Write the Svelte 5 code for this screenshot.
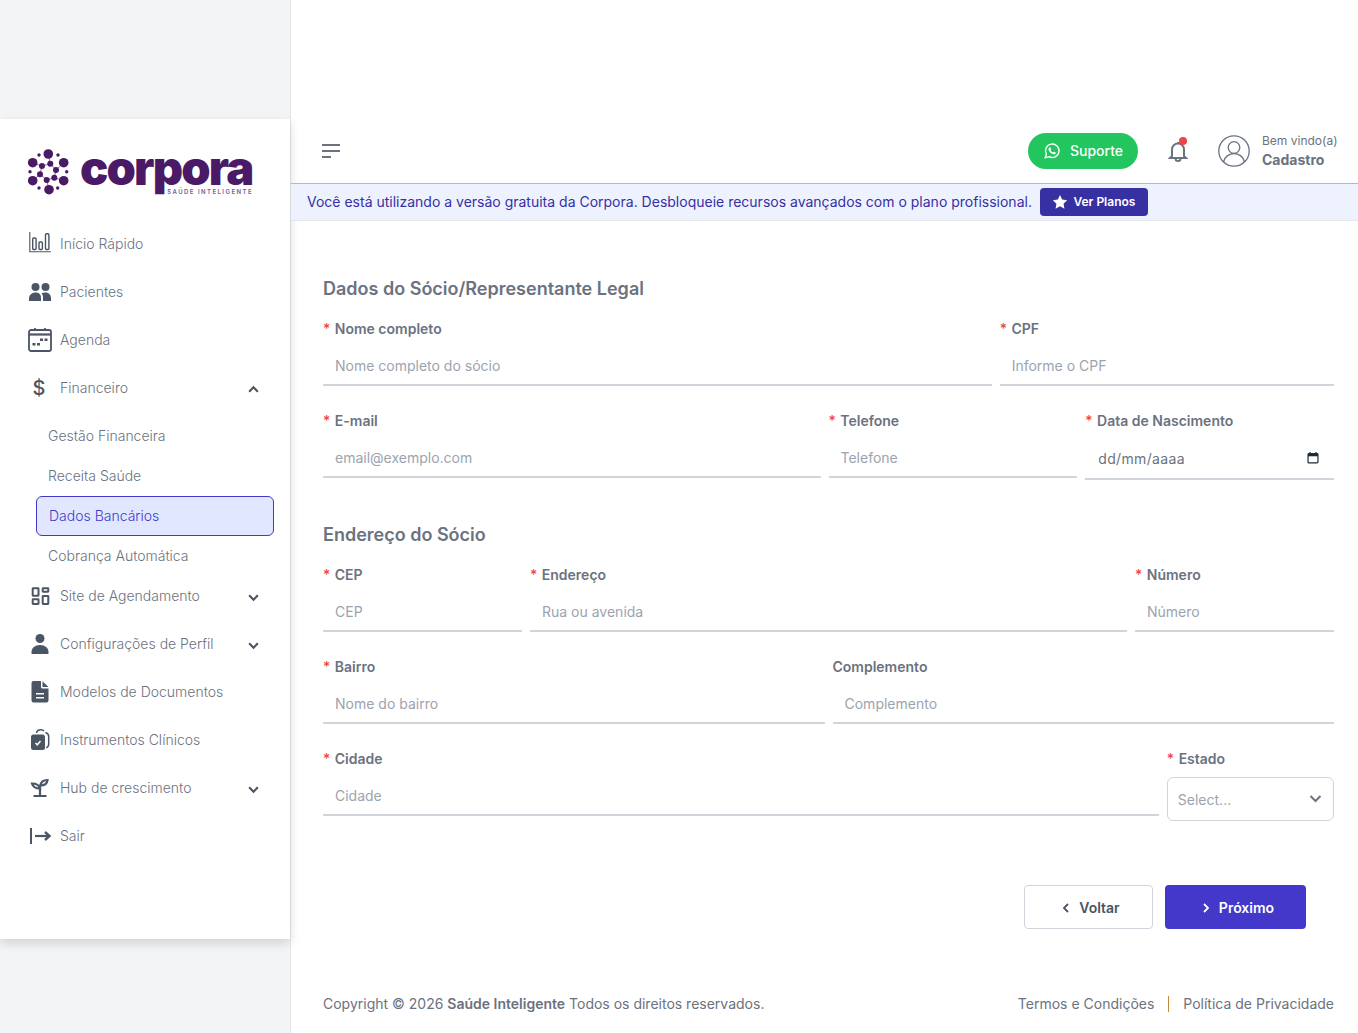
<script>
  const menuTop = [
    { label: 'Início Rápido', icon: 'chart' },
    { label: 'Pacientes', icon: 'users' },
    { label: 'Agenda', icon: 'cal' }
  ];
  const sub = ['Gestão Financeira', 'Receita Saúde', 'Dados Bancários', 'Cobrança Automática'];
  const menuBottom = [
    { label: 'Site de Agendamento', icon: 'grid', chev: true },
    { label: 'Configurações de Perfil', icon: 'user', chev: true },
    { label: 'Modelos de Documentos', icon: 'doc' },
    { label: 'Instrumentos Clínicos', icon: 'clip' },
    { label: 'Hub de crescimento', icon: 'sprout', chev: true },
    { label: 'Sair', icon: 'exit' }
  ];
  const dots = [
    [48.3,154,4.8],[32.7,162.7,4.8],[63.7,162.7,4.8],[32.7,180.7,4.8],[63.7,180.7,4.8],[49,189.7,4.8],
    [42,166,3],[50.3,163.7,3],[56,170,3],[40,174.3,3],[46.7,180,3],[54.3,177.7,3],
    [39,155,1.7],[58,155,1.7],[30,171.7,1.7],[66.7,171.7,1.7],[39,188,1.7],[57.7,188,1.7]
  ];
  const links = [[48.3,154,50.3,163.7],[32.7,162.7,42,166],[63.7,162.7,56,170],[32.7,180.7,40,174.3],[63.7,180.7,54.3,177.7],[49,189.7,46.7,180],[42,166,50.3,163.7],[42,166,40,174.3],[40,174.3,46.7,180],[46.7,180,54.3,177.7],[54.3,177.7,56,170],[50.3,163.7,56,170]];
</script>

{#snippet icon(name)}
  <svg class="ico" viewBox="0 0 24 24" aria-hidden="true">
    {#if name === 'chart'}
      <path d="M1.800 0v19.700h21" fill="none" stroke="#4b5563" stroke-width="1.100"/>
      <g fill="none" stroke="#4b5563" stroke-width="1.400"><rect x="4.700" y="6" width="3.400" height="11.500" rx="1"/><rect x="11" y="10" width="3.400" height="7.500" rx="1"/><rect x="17.500" y="1.800" width="3.400" height="15.700" rx="1"/></g>
    {:else if name === 'users'}
      <g fill="#4b5563"><circle cx="7.500" cy="7" r="4"/><circle cx="17.500" cy="7" r="4"/><path d="M1 21v-2.500c0-3.500 3-6 6.500-6s5.500 2 5.500 5v3.500z"/><path d="M15 21v-4c0-1.500-.6-3-1.500-3.800 1-.5 2.500-.7 4-.7 3.500 0 5.500 2.500 5.500 6v2.500z"/></g>
    {:else if name === 'cal'}
      <path d="M7 0v3M17 0v3" stroke="#4b5563" stroke-width="1.800"/>
      <rect x="1" y="2" width="22" height="21" rx="2" fill="none" stroke="#4b5563" stroke-width="1.800"/>
      <path d="M1 6.500h22" stroke="#4b5563" stroke-width="2.200"/>
      <g fill="#4b5563"><rect x="4.500" y="15" width="3" height="2.500"/><rect x="9" y="15" width="3" height="2.500"/><rect x="12" y="10.500" width="3" height="2.500"/><rect x="16.500" y="10.500" width="3" height="2.500"/></g>
    {:else if name === 'grid'}
      <g fill="none" stroke="#4b5563" stroke-width="2"><rect x="4.700" y="4.300" width="5.800" height="7.400" rx=".4"/><rect x="14.700" y="4.300" width="5.600" height="3.400" rx=".4"/><rect x="4.700" y="15.300" width="5.800" height="4.700" rx=".4"/><rect x="14.700" y="12" width="5.600" height="8" rx=".4"/></g>
    {:else if name === 'user'}
      <g fill="#4b5563"><circle cx="12" cy="6.500" r="4.500"/><path d="M3.500 21.500v-1.500c0-4 3.500-7 8.500-7s8.500 3 8.500 7v1.500c0 .3-.2.5-.5.5H4c-.3 0-.5-.2-.5-.5z"/></g>
    {:else if name === 'doc'}
      <path fill="#4b5563" fill-rule="evenodd" d="M5.500 1H13v6c0 .8.700 1.500 1.500 1.500h6v12a2 2 0 0 1-2 2h-13a2 2 0 0 1-2-2v-17.500a2 2 0 0 1 2-2zM8 13v1.500h8V13zM8 17v1.500h8V17z"/>
      <path fill="#4b5563" d="M14.500 1.200 20.500 7h-6z"/>
    {:else if name === 'clip'}
      <path d="M8.500 5C8.800 3 10.500 1.800 12.500 1.800h.5M16 3.200c-.5-.8-1.500-1.400-3-1.400M17.500 4.500c2 .5 3.200 2 3.200 4v7.500c0 2-.8 3.200-2.400 3.800" fill="none" stroke="#4b5563" stroke-width="1.500"/>
      <rect x="3" y="6.500" width="14" height="15.500" rx="2.500" fill="#4b5563"/>
      <path d="M7.500 15l1.800 1.800 3.200-3.800" fill="none" stroke="#fff" stroke-width="1.500"/>
    {:else if name === 'sprout'}
      <g fill="none" stroke="#4b5563" stroke-width="2.200"><path d="M5.500 20h13M12 20v-8c0-2 .3-3 1-4"/><path d="M4 7.500c3.500 0 7 1.500 8 5-3.500 0-7-1.200-8-5z"/><path d="M19.500 4c-3.500 0-6.500 1-7 5.500 3.500 0 6.500-1.500 7-5.500z"/></g>
    {:else if name === 'exit'}
      <path d="M3 4v16" stroke="#4b5563" stroke-width="2"/>
      <path d="M7 12h13" stroke="#4b5563" stroke-width="2.200"/>
      <path d="M17 8l4.500 4-4.500 4" fill="none" stroke="#4b5563" stroke-width="2.400"/>
    {/if}
  </svg>
{/snippet}

{#snippet chevron(up)}
  <svg class="chev" viewBox="0 0 12 12" aria-hidden="true"><path d={up ? 'M2 8l4-4 4 4' : 'M2 4l4 4 4-4'} /></svg>
{/snippet}

{#snippet field(label, placeholder, req = true, grow = 1)}
  <div class="field" style="flex-grow:{grow}">
    <span class="lab">{#if req}<i>*</i>{/if}{label}</span>
    <input class="inp" {placeholder} />
  </div>
{/snippet}

<div class="page">
  <aside class="side">
    <div class="panel">
      <div class="logo">
        <svg class="mark" viewBox="26 147 46 49" aria-hidden="true">
          <g stroke="#6d4a8c" stroke-width=".8">{#each links as l}<line x1={l[0]} y1={l[1]} x2={l[2]} y2={l[3]} />{/each}</g>
          <g fill="#4a1a66">{#each dots as d}<circle cx={d[0]} cy={d[1]} r={d[2]} />{/each}</g>
        </svg>
        <div class="word">
          <span class="wm">corpora</span>
          <span class="tag">SAÚDE INTELIGENTE</span>
        </div>
      </div>
      <nav class="nav">
        {#each menuTop as m}
          <div class="item">{@render icon(m.icon)}<span>{m.label}</span></div>
        {/each}
        <div class="item">
          <span class="dollar">$</span><span class="grow">Financeiro</span>{@render chevron(true)}
        </div>
        <div class="subs">
          {#each sub as s}
            <div class="sub" class:active={s === 'Dados Bancários'}>{s}</div>
          {/each}
        </div>
        {#each menuBottom as m}
          <div class="item">{@render icon(m.icon)}<span class="grow">{m.label}</span>{#if m.chev}{@render chevron(false)}{/if}</div>
        {/each}
      </nav>
    </div>
  </aside>

  <main class="main">
    <header class="top">
      <svg class="burger" viewBox="0 0 18 14" aria-hidden="true"><path d="M0 1h18M0 7h18M0 13h9"/></svg>
      <div class="top-right">
        <div class="suporte">
          <svg viewBox="0 0 24 24" aria-hidden="true"><path fill="none" stroke="#fff" stroke-width="1.800" d="M3 21l1.500-5A9 9 0 1 1 8 19.500z"/><path fill="#fff" d="M8.500 7.500c.4-.4 1-.5 1.300-.2l1 2c.1.300 0 .600-.2.800l-.6.700c.7 1.400 1.800 2.500 3.300 3.200l.8-.8c.2-.2.500-.3.800-.2l2 1c.3.300.2 1-.2 1.500-.8.900-2 1-3 .7-3.200-.9-5.500-3.200-6.300-6-.3-1-.2-2 1.100-2.700z"/></svg>
          <span>Suporte</span>
        </div>
        <div class="bell">
          <svg viewBox="0 0 24 24" aria-hidden="true"><path fill="none" stroke="#6b7280" stroke-width="2" d="M6 17V10.500a6 6 0 0 1 12 0V17l2 2H4zM9.500 19.500a2.500 2.500 0 0 0 5 0M12 3v1.500"/></svg>
          <span class="dot"></span>
        </div>
        <svg class="avatar" viewBox="0 0 32 32" aria-hidden="true"><circle cx="16" cy="16" r="15.200"/><circle cx="16" cy="12.500" r="5.800"/><path d="M5.500 27c1-5 5.500-8.500 10.500-8.500s9.500 3.500 10.500 8.500"/></svg>
        <div class="who"><span>Bem vindo(a)</span><b>Cadastro</b></div>
      </div>
    </header>
    <div class="banner">
      <span>Você está utilizando a versão gratuita da Corpora. Desbloqueie recursos avançados com o plano profissional.</span>
      <div class="plans">
        <svg viewBox="0 0 24 24" aria-hidden="true"><path fill="#fff" d="M12 1.500l3.300 6.900 7.500 1-5.500 5.200 1.400 7.500L12 18.500l-6.700 3.600 1.400-7.500L1.200 9.400l7.500-1z"/></svg>
        <span>Ver Planos</span>
      </div>
    </div>

    <form class="form">
      <h2 class="first">Dados do Sócio/Representante Legal</h2>
      <div class="row">
        {@render field('Nome completo', 'Nome completo do sócio', true, 2)}
        {@render field('CPF', 'Informe o CPF')}
      </div>
      <div class="row">
        {@render field('E-mail', 'email@exemplo.com', true, 2)}
        {@render field('Telefone', 'Telefone')}
        <div class="field">
          <span class="lab"><i>*</i>Data de Nascimento</span>
          <div class="date">
            <input class="inp tall" placeholder="dd/mm/aaaa" />
            <svg viewBox="0 0 14 14" aria-hidden="true"><path d="M3.500 0v2M10.500 0v2" stroke="#1f2937" stroke-width="1.400"/><rect x="1.200" y="2" width="11.600" height="10.800" rx="1" fill="none" stroke="#1f2937" stroke-width="1.400"/><rect x="1.200" y="2" width="11.600" height="3" fill="#1f2937"/></svg>
          </div>
        </div>
      </div>

      <h2>Endereço do Sócio</h2>
      <div class="row">
        {@render field('CEP', 'CEP')}
        {@render field('Endereço', 'Rua ou avenida', true, 3)}
        {@render field('Número', 'Número')}
      </div>
      <div class="row">
        {@render field('Bairro', 'Nome do bairro')}
        {@render field('Complemento', 'Complemento', false)}
      </div>
      <div class="row last">
        {@render field('Cidade', 'Cidade', true, 5)}
        <div class="field">
          <span class="lab"><i>*</i>Estado</span>
          <div class="select"><span>Select...</span>{@render chevron(false)}</div>
        </div>
      </div>

      <div class="actions">
        <button type="button" class="btn back"><svg viewBox="0 0 12 12" aria-hidden="true"><path d="M8 2L4 6l4 4"/></svg>Voltar</button>
        <button type="button" class="btn next"><svg viewBox="0 0 12 12" aria-hidden="true"><path d="M4 2l4 4-4 4"/></svg>Próximo</button>
      </div>
    </form>

    <footer class="foot">
      <span>Copyright © 2026 <b>Saúde Inteligente</b> Todos os direitos reservados.</span>
      <div class="legal"><span>Termos e Condições</span><em></em><span>Política de Privacidade</span></div>
    </footer>
  </main>
</div>

<style>
  :global(body) { margin: 0; background: #fff; }
  .page {
    display: flex;
    height: 1033px;
    overflow: hidden;
    font-family: Inter, "Liberation Sans", sans-serif;
    font-size: 14px;
    line-height: 20px;
    color: #6b7280;
  }
  .side {
    width: 290px;
    flex: none;
    background: #f3f4f6;
    border-right: 1px solid #e5e7eb;
    padding-top: 119px;
    box-sizing: content-box;
  }
  .panel {
    height: 820px;
    background: #fff;
    box-shadow: 0 4px 10px rgba(0,0,0,.14);
    box-sizing: border-box;
    padding-top: 29px;
  }
  .logo { display: flex; gap: 8px; margin-left: 26px; height: 62px; }
  .mark { width: 46px; height: 49px; flex: none; margin-top: -1px; }
  .word { display: flex; flex-direction: column; width: 173px; }
  .wm {
    font-weight: 900;
    font-size: 47px;
    line-height: 36px;
    letter-spacing: -1.800px;
    color: #4a1a66;
    margin-top: 2px;
  }
  .tag {
    font-size: 6px;
    font-weight: 600;
    line-height: 8px;
    letter-spacing: 1.450px;
    color: #7a5a94;
    text-align: right;
    margin-top: 2px;
  }
  .nav { margin-top: 14px; font-weight: 300; }
  .item {
    height: 40px;
    margin-bottom: 8px;
    display: flex;
    align-items: center;
    padding: 0 26px 0 28px;
  }
  .ico { width: 24px; height: 24px; flex: none; margin-right: 8px; }
  .dollar { width: 22px; margin-right: 10px; text-align: center; font-size: 20px; font-weight: 500; color: #4b5563; }
  .grow { flex: 1; }
  .chev { width: 13px; height: 13px; flex: none; fill: none; stroke: #4b5563; stroke-width: 2; margin-top: 3px; margin-right: 4px; }
  .subs { padding: 0 16px 0 36px; }
  .sub {
    height: 40px;
    display: flex;
    align-items: center;
    padding-left: 12px;
    box-sizing: border-box;
  }
  .sub.active {
    background: #e0e7ff;
    border: 1px solid #4338ca;
    border-radius: 6px;
    color: #4338ca;
  }

  .main { flex: 1; min-width: 0; padding-top: 119px; display: flex; flex-direction: column; }
  .top {
    height: 64px;
    display: flex;
    align-items: center;
    justify-content: space-between;
    padding: 0 20px 0 31px;
    box-sizing: border-box;
  }
  .burger { width: 18px; height: 14px; fill: none; stroke: #6b7280; stroke-width: 2; }
  .top-right { display: flex; align-items: center; }
  .suporte {
    width: 110px;
    height: 36px;
    border-radius: 18px;
    background: #22c55e;
    color: #fff;
    display: flex;
    align-items: center;
    justify-content: center;
    gap: 9px;
    font-weight: 500;
  }
  .suporte svg { width: 18px; height: 18px; }
  .bell { position: relative; width: 24px; height: 24px; margin-left: 28px; }
  .bell svg { width: 24px; height: 24px; display: block; }
  .dot { position: absolute; top: -2px; right: 3px; width: 8px; height: 8px; border-radius: 50%; background: #ef4444; }
  .avatar { width: 32px; height: 32px; margin-left: 28px; fill: none; stroke: #6b7280; stroke-width: 1.300; }
  .who { display: flex; flex-direction: column; margin-left: 12px; width: 76px; }
  .who span { font-size: 12px; line-height: 18px; white-space: nowrap; }
  .who b { font-size: 14px; line-height: 20px; font-weight: 700; }

  .banner {
    height: 38px;
    background: #eef2ff;
    border-top: 1px solid #a5b4fc;
    border-bottom: 1px solid #e5e7eb;
    box-sizing: border-box;
    display: flex;
    align-items: center;
    gap: 8px;
    padding-left: 16px;
    color: #3730a3;
  }
  .plans {
    width: 108px;
    height: 28px;
    background: #3730a3;
    border-radius: 4px;
    color: #fff;
    font-size: 12px;
    font-weight: 600;
    display: flex;
    align-items: center;
    justify-content: center;
    gap: 5px;
  }
  .plans svg { width: 16px; height: 16px; }

  .form { padding: 0 24px 0 32px; }
  h2 { font-size: 18px; line-height: 28px; font-weight: 600; margin: 41px 0 16px; color: #6b7280; }
  h2.first { margin-top: 54px; }
  .row { display: flex; gap: 8px; margin-bottom: 25px; }
  .row.last { margin-bottom: 0; }
  .field { flex: 1 1 0; min-width: 0; display: flex; flex-direction: column; gap: 8px; }
  .lab { font-weight: 600; color: #6b7280; }
  .lab i { color: #ef4444; font-style: normal; margin-right: 4.500px; font-weight: 500; }
  .inp {
    display: block;
    width: 100%;
    height: 39px;
    box-sizing: border-box;
    border: 0;
    border-bottom: 2px solid #d1d5db;
    padding: 0 12px;
    font: inherit;
    color: #6b7280;
    background: transparent;
    outline: none;
  }
  .inp::placeholder { color: #9ca3af; opacity: 1; }
  .inp.tall { height: 41px; letter-spacing: .35px; padding-left: 13px; }
  .inp.tall::placeholder { color: #6b7280; }
  .date { position: relative; }
  .date svg { position: absolute; right: 15px; top: 13px; width: 12px; height: 12px; }
  .select {
    height: 44px;
    box-sizing: border-box;
    border: 1px solid #d1d5db;
    border-radius: 6px;
    display: flex;
    align-items: center;
    justify-content: space-between;
    padding: 1px 6px 0 10px;
    color: #9ca3af;
  }
  .select .chev { width: 15px; height: 15px; margin-top: -3px; stroke: #6b7280; stroke-width: 1.600; }
  .actions { display: flex; justify-content: flex-end; gap: 12px; margin-top: 64px; padding-right: 28px; }
  .btn {
    height: 44px;
    border-radius: 4px;
    font: inherit;
    font-weight: 600;
    display: flex;
    align-items: center;
    justify-content: center;
    gap: 7px;
    padding: 1px 0 0 3px;
    box-sizing: border-box;
  }
  .btn svg { width: 12px; height: 12px; fill: none; stroke: currentColor; stroke-width: 1.800; }
  .back { width: 129px; background: #fff; border: 1px solid #d1d5db; color: #4b5563; }
  .next { width: 141px; background: #4338ca; border: 0; color: #fff; }
  .foot {
    margin-top: auto;
    height: 58px;
    padding: 0 24px 0 32px;
    display: flex;
    justify-content: space-between;
    align-items: flex-start;
    box-sizing: border-box;
    padding-top: 19px;
  }
  .foot b { font-weight: 600; }
  .legal { display: flex; align-items: center; }
  .legal em { width: 1px; height: 16px; background: #c2873d; margin: 0 14px; }
</style>
